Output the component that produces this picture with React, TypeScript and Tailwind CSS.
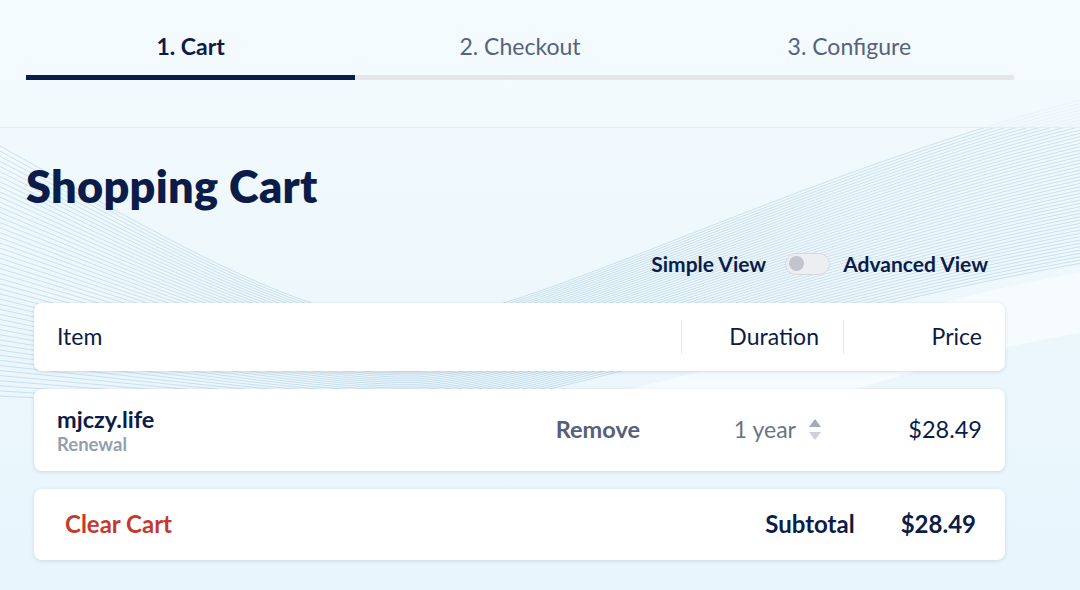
import React from "react";

const steps = [
  { label: "1. Cart", active: true },
  { label: "2. Checkout", active: false },
  { label: "3. Configure", active: false },
];

function WaveBackground() {
  const lines = Array.from({ length: 50 }, (_, i) => {
    const t = i / 49;
    const yL = 135 + t * 260;
    const yT = 322 + t * 90;
    const yR = 95 + t * 165;
    const d = `M -20 ${yL} C 150 ${yL + (yT - yL) * 0.5}, 300 ${yT}, 410 ${yT} C 520 ${yT}, 800 ${yR + (yT - yR) * 0.33}, 1100 ${yR}`;
    return <path key={i} d={d} fill="none" stroke="#9fc3dc" strokeWidth={0.7} strokeOpacity={0.65} />;
  });
  return (
    <svg className="absolute inset-0 h-full w-full" viewBox="0 0 1080 590" preserveAspectRatio="none">
      <defs>
        <linearGradient id="bg" x1="0" y1="0" x2="0" y2="1">
          <stop offset="0" stopColor="#f3fafd" />
          <stop offset="1" stopColor="#e7f5fc" />
        </linearGradient>
      </defs>
      <rect width="1080" height="590" fill="url(#bg)" />
      <path d="M 420 420 C 700 400, 880 300, 1100 270 L 1100 330 C 880 360, 700 470, 420 470 Z" fill="#ffffff" fillOpacity={0.5} />
      {lines}
    </svg>
  );
}

function Spinner() {
  return (
    <span className="ml-[13px] flex flex-col gap-[5px]">
      <svg width="12" height="8" viewBox="0 0 12 8">
        <path d="M6 0 L12 8 L0 8 Z" fill="#a3abb7" />
      </svg>
      <svg width="12" height="8" viewBox="0 0 12 8">
        <path d="M0 0 L12 0 L6 8 Z" fill="#cdd2da" />
      </svg>
    </span>
  );
}

export default function App() {
  return (
    <div className="relative h-[590px] w-[1080px] overflow-hidden font-['Lato',sans-serif] text-[#0c1c48]">
      <WaveBackground />
      <div className="relative">
        {/* steps */}
        <div className="h-[128px] border-b border-[#e2eef4] bg-[#f4fbfe]/70">
          <div className="ml-[26px] w-[988px] pt-[31px]">
            <div className="grid grid-cols-3">
              {steps.map((s) => (
                <div
                  key={s.label}
                  className={
                    s.active
                      ? "text-center text-[23px] leading-[30px] font-bold text-[#0c1c48]"
                      : "text-center text-[23px] leading-[30px] text-[#58627a]"
                  }
                >
                  {s.label}
                </div>
              ))}
            </div>
            <div className="mt-[14px] grid h-[5px] grid-cols-3 bg-[#e4e6e8]">
              <div className="bg-[#0c1c48]" />
            </div>
          </div>
        </div>

        {/* cart */}
        <div className="pl-[26px]">
          <h1 className="mt-[32px] text-[45px] leading-[52px] font-extrabold tracking-[0.3px]">Shopping Cart</h1>

          <div className="mt-[36px] flex w-[962px] items-center justify-end text-[21px] font-bold">
            <span>Simple View</span>
            <span className="mr-[13px] ml-[19px] flex h-[22px] w-[45px] items-center rounded-full border border-[#d6d9e0] bg-[#eceef2] px-[3px]">
              <span className="h-[15px] w-[15px] rounded-full bg-[#c2c5cd]" />
            </span>
            <span>Advanced View</span>
          </div>

          <div className="ml-[8px] w-[971px]">
            {/* header */}
            <div className="mt-[23px] flex h-[68px] items-center rounded-[8px] bg-white text-[23px] shadow-[0_1px_4px_rgba(0,0,0,0.12)]">
              <div className="w-[647px] pl-[23px]">Item</div>
              <div className="flex h-[34px] w-[162px] items-center justify-end border-l border-[#e6e8eb] pr-[24px]">Duration</div>
              <div className="flex h-[34px] w-[162px] items-center justify-end border-l border-[#e6e8eb] pr-[23px]">Price</div>
            </div>

            {/* item row */}
            <div className="mt-[18px] flex h-[82px] items-center rounded-[8px] bg-white shadow-[0_1px_4px_rgba(0,0,0,0.12)]">
              <div className="flex w-[647px] items-center justify-between pr-[41px] pl-[23px]">
                <div className="flex flex-col">
                  <span className="text-[23.5px] leading-[28px] font-bold">mjczy.life</span>
                  <span className="text-[18.5px] leading-[22px] font-bold text-[#959eae]">Renewal</span>
                </div>
                <span className="text-[23.5px] font-bold text-[#56607a]">Remove</span>
              </div>
              <div className="flex w-[162px] items-center justify-end pr-[22px] text-[23px] text-[#6a7387]">
                1 year
                <Spinner />
              </div>
              <div className="w-[162px] pr-[23px] text-right text-[23.5px]">$28.49</div>
            </div>

            {/* footer */}
            <div className="mt-[18px] flex h-[71px] items-center justify-between rounded-[8px] bg-white pr-[29px] pl-[31px] text-[24px] font-bold shadow-[0_1px_4px_rgba(0,0,0,0.12)]">
              <span className="text-[#c43a2f]">Clear Cart</span>
              <div className="flex items-center gap-[46px]">
                <span>Subtotal</span>
                <span>$28.49</span>
              </div>
            </div>
          </div>
        </div>
      </div>
    </div>
  );
}
